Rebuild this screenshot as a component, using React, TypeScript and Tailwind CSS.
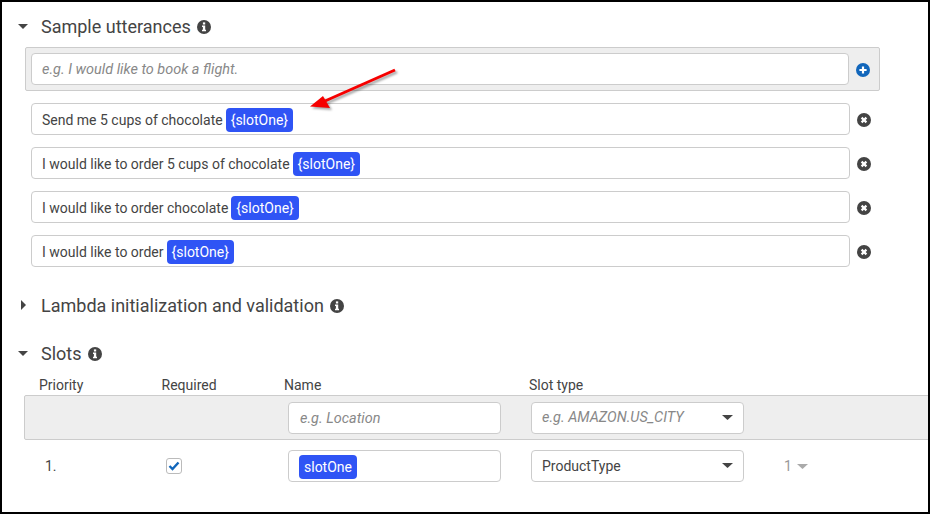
const font = { fontFamily: "Roboto, sans-serif" };

const Caret = ({ open = true }: { open?: boolean }) => (
  <svg width="10" height="10" viewBox="0 0 10 10" className="shrink-0">
    {open ? <path d="M0 3h10L5 8z" fill="#444" /> : <path d="M3 0v10l5-5z" fill="#444" />}
  </svg>
);

const InfoIcon = () => (
  <svg width="14" height="14" viewBox="0 0 14 14" className="shrink-0">
    <circle cx="7" cy="7" r="7" fill="#444" />
    <rect x="5.9" y="2.4" width="2.3" height="2.1" fill="#fff" />
    <path d="M5 5.6h3.2v4.2H9v1.4H5V9.8h.9V7H5z" fill="#fff" />
  </svg>
);

const CircleX = () => (
  <svg width="14" height="14" viewBox="0 0 14 14" className="shrink-0">
    <circle cx="7" cy="7" r="7" fill="#444" />
    <path d="M4.6 4.6l4.8 4.8M9.4 4.6l-4.8 4.8" stroke="#fff" strokeWidth="2.2" />
  </svg>
);

const CirclePlus = () => (
  <svg width="14" height="14" viewBox="0 0 14 14" className="shrink-0">
    <circle cx="7" cy="7" r="7" fill="#1166bb" />
    <path d="M7 3.4v7.2M3.4 7h7.2" stroke="#fff" strokeWidth="2.2" />
  </svg>
);

const Chip = () => (
  <span className="bg-[#2f54f5] text-white rounded-[4px] h-6 px-[5px] flex items-center ml-[3px]">
    {"{slotOne}"}
  </span>
);

const Heading = ({ title, open = true, className }: { title: string; open?: boolean; className: string }) => (
  <div className={`flex items-center h-6 ${className}`}>
    <div className="w-[39px] pl-[16px] flex">
      <Caret open={open} />
    </div>
    <span className="text-[18px] text-[#444]">{title}</span>
    <span className="ml-[6px] mt-px">
      <InfoIcon />
    </span>
  </div>
);

const Utterance = ({ text }: { text: string }) => (
  <div className="flex items-center">
    <div className="w-[819px] h-8 bg-white border border-[#ccc] rounded-[4px] pl-[10px] pt-[2px] flex items-center text-[14px] text-[#444]">
      {text}
      <Chip />
    </div>
    <span className="ml-[7px] mt-[2px]">
      <CircleX />
    </span>
  </div>
);

const SelectBox = ({ children }: { children: React.ReactNode }) => (
  <div className="w-[213px] h-8 bg-white border border-[#ccc] rounded-[4px] pl-[10px] pr-[10px] pt-px flex items-center justify-between">
    {children}
    <svg width="11" height="5" viewBox="0 0 11 5" className="mb-[2px]">
      <path d="M0 0h11L5.5 5z" fill="#444" />
    </svg>
  </div>
);

export default function App() {
  return (
    <div
      style={font}
      className="relative w-[930px] h-[514px] bg-white border-2 border-black overflow-hidden text-[#444]"
    >
      <Heading title="Sample utterances" className="mt-[12px]" />

      <div className="mt-[9px] ml-[23px] w-[855px] h-[44px] bg-[#eee] border border-[#ccc] rounded-[2px] pl-[5px] flex items-center">
        <div className="w-[818px] h-8 bg-white border border-[#ccc] rounded-[4px] pl-[10px] pt-[2px] flex items-center text-[14.45px] italic text-[#888]">
          e.g. I would like to book a flight.
        </div>
        <span className="ml-[7px] mt-px">
          <CirclePlus />
        </span>
      </div>

      <div className="mt-[12px] ml-[29px] flex flex-col gap-3">
        <Utterance text="Send me 5 cups of chocolate" />
        <Utterance text="I would like to order 5 cups of chocolate" />
        <Utterance text="I would like to order chocolate" />
        <Utterance text="I would like to order" />
      </div>

      <Heading title="Lambda initialization and validation" open={false} className="mt-[26px]" />
      <Heading title="Slots" className="mt-[24px]" />

      <div className="mt-[12px] flex items-center h-4 text-[14px] text-[#444]">
        <span className="ml-[37px] w-[122.5px]">Priority</span>
        <span className="w-[122.5px]">Required</span>
        <span className="w-[245px]">Name</span>
        <span>Slot type</span>
      </div>

      <div className="mt-[2px] ml-[22px] w-[920px] h-[45px] bg-[#eee] border border-[#ccc] rounded-[2px] flex items-center">
        <div className="ml-[263px] w-[213px] h-8 bg-white border border-[#ccc] rounded-[4px] px-[11px] pt-[2px] flex items-center text-[14.45px] italic text-[#888]">
          e.g. Location
        </div>
        <div className="ml-[30px] italic text-[14.45px] text-[#888]">
          <SelectBox>e.g. AMAZON.US_CITY</SelectBox>
        </div>
      </div>

      <div className="mt-[10px] flex items-center h-8 text-[14px]">
        <span className="ml-[43px] w-[121px]">1.</span>
        <span className="w-[16px] h-[16px] bg-white border border-[#bbb] rounded-[3px] flex items-center justify-center">
          <svg width="12" height="10" viewBox="0 0 12 10">
            <path d="M1.5 5l3 3 6-6.5" fill="none" stroke="#1166bb" strokeWidth="2.4" />
          </svg>
        </span>
        <div className="ml-[106px] w-[213px] h-8 bg-white border border-[#ccc] rounded-[4px] pl-[10px] pt-[2px] flex items-center">
          <span className="bg-[#2f54f5] text-white rounded-[4px] h-6 px-[5px] flex items-center">slotOne</span>
        </div>
        <div className="ml-[30px]">
          <SelectBox>ProductType</SelectBox>
        </div>
        <span className="ml-[40px] text-[#999]">1</span>
        <svg width="11" height="5" viewBox="0 0 11 5" className="ml-[5px]">
          <path d="M0 0h11L5.5 5z" fill="#aaa" />
        </svg>
      </div>

      {/* annotation arrow */}
      <svg
        width="100"
        height="50"
        viewBox="0 0 100 50"
        className="absolute left-[303px] top-[63px] drop-shadow-[2px_2px_1px_rgba(0,0,0,0.35)]"
      >
        <path d="M90 5L20 36" stroke="#f60000" strokeWidth="3" fill="none" />
        <path d="M5 41.5L18 31L25 43z" fill="#f60000" />
      </svg>
    </div>
  );
}
